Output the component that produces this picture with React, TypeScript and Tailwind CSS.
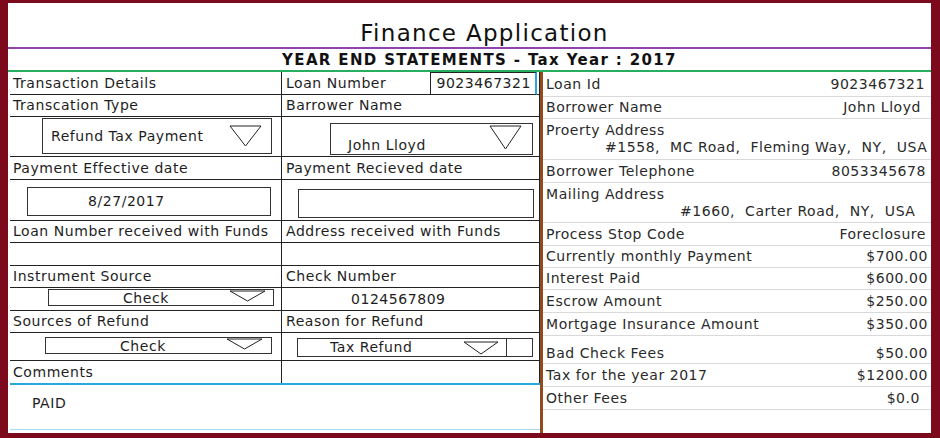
import React from 'react';

const font = { fontFamily: '"DejaVu Sans", Verdana, sans-serif' };

// outlined "select" arrow
const Arrow = ({ w, h, className = '' }: { w: number; h: number; className?: string }) => (
  <svg width={w} height={h} viewBox={`0 0 ${w} ${h}`} className={`shrink-0 ${className}`}>
    <polygon points={`1,1 ${w - 1},1 ${w / 2},${h - 1}`} fill="white" stroke="#222" strokeWidth="1" />
  </svg>
);

type Row = { label: string; value?: string; h: string; pr?: string; extra?: React.ReactNode };

const summary: Row[] = [
  { label: 'Loan Id', value: '9023467321', h: 'h-[25px]', pr: 'pr-[6px]' },
  { label: 'Borrower Name', value: 'John Lloyd', h: 'h-[22px]', pr: 'pr-[10px]' },
  {
    label: 'Proerty Address',
    h: 'h-[41px] leading-[17px]',
    extra: <div className="pl-[59px] whitespace-pre">#1558,  MC Road,  Fleming Way,  NY,  USA</div>,
  },
  { label: 'Borrower Telephone', value: '8053345678', h: 'h-[23px]', pr: 'pr-[5px]' },
  {
    label: 'Mailing Address',
    h: 'h-[40px] leading-[17px]',
    extra: <div className="pl-[134px] whitespace-pre">#1660,  Carter Road,  NY,  USA</div>,
  },
  { label: 'Process Stop Code', value: 'Foreclosure', h: 'h-[23px]', pr: 'pr-[5px]' },
  { label: 'Currently monthly Payment', value: '$700.00', h: 'h-[22px]', pr: 'pr-[3px]' },
  { label: 'Interest Paid', value: '$600.00', h: 'h-[22px]', pr: 'pr-[3px]' },
  { label: 'Escrow Amount', value: '$250.00', h: 'h-[23px]', pr: 'pr-[3px]' },
  { label: 'Mortgage Insurance Amount', value: '$350.00', h: 'h-[23px]', pr: 'pr-[3px]' },
  { label: 'Bad Check Fees', value: '$50.00', h: 'h-[28px] pt-[8px]', pr: 'pr-[3px]' },
  { label: 'Tax for the year 2017', value: '$1200.00', h: 'h-[23px]', pr: 'pr-[3px]' },
  { label: 'Other Fees', value: '$0.0', h: 'h-[23px]', pr: 'pr-[11px]' },
];

const Cell = ({ children, className = '' }: { children?: React.ReactNode; className?: string }) => (
  <div className={`relative flex items-center whitespace-nowrap ${className}`}>{children}</div>
);

export default function App() {
  return (
    <div
      style={font}
      className="w-[940px] h-[438px] bg-white border-l-[8px] border-t-[3px] border-r-[9px] border-b-[5px] border-[#7d0a1c] flex flex-col text-[14px] tracking-[0.55px] text-[#1e1e1e]"
    >
      {/* heading */}
      <div className="h-[46px] shrink-0 border-b-2 border-[#8e44ad] flex items-end justify-center pb-[2px]">
        <span className="text-[23px] tracking-[1.3px] leading-none pl-[30px] text-[#111]">Finance Application</span>
      </div>
      <div className="h-[23px] shrink-0 border-b-2 border-[#27ae60] flex items-center justify-center">
        <span className="font-bold text-[15px] tracking-[1.35px] text-[#111] pt-[1px] pl-[20px]">
          YEAR END STATEMENTS - Tax Year : 2017
        </span>
      </div>

      <div className="flex flex-1 min-h-0">
        {/* form */}
        <div className="w-[532px] pl-[2px] flex flex-col">
          <div className="flex border-b border-[#222] h-[23px]">
            <Cell className="w-[272px] border-r border-[#222] pl-[3px]">Transaction Details</Cell>
            <Cell className="flex-1 border-r border-[#222] pl-[4px]">
              Loan Number
              <div className="ml-auto mr-[2px] mt-[1px] h-[23px] w-[107px] border border-[#222] border-r-[#29a8e0] border-r-2 flex items-center justify-end pr-[4px] bg-white">
                9023467321
              </div>
            </Cell>
          </div>
          <div className="flex border-b border-[#222] h-[22px]">
            <Cell className="w-[272px] border-r border-[#222] pl-[3px]">Transcation Type</Cell>
            <Cell className="flex-1 border-r border-[#222] pl-[4px]">Barrower Name</Cell>
          </div>
          <div className="flex border-b border-[#222] h-[40px]">
            <Cell className="w-[272px] border-r border-[#222] pl-[32px] pr-[9px]">
              <div className="w-full h-[36px] mb-[1px] border border-[#333] flex items-center pl-[8px] pr-[9px]">
                <span className="flex-1">Refund Tax Payment</span>
                <Arrow w={33} h={22} />
              </div>
            </Cell>
            <Cell className="flex-1 border-r border-[#222] pl-[48px] pr-[6px]">
              <div className="w-full h-[32px] mt-[5px] border border-[#333] flex pl-[17px] pr-[10px]">
                <span className="flex-1 self-end leading-[18px]">John Lloyd</span>
                <Arrow w={33} h={25} className="mt-[1px]" />
              </div>
            </Cell>
          </div>
          <div className="flex border-b border-[#222] h-[23px]">
            <Cell className="w-[272px] border-r border-[#222] pl-[3px]">Payment Effective date</Cell>
            <Cell className="flex-1 border-r border-[#222] pl-[4px]">Payment Recieved date</Cell>
          </div>
          <div className="flex border-b border-[#222] h-[41px]">
            <Cell className="w-[272px] border-r border-[#222] pl-[17px] pr-[10px]">
              <div className="w-full h-[29px] mt-[3px] border border-[#333] flex items-center pl-[60px]">8/27/2017</div>
            </Cell>
            <Cell className="flex-1 border-r border-[#222] pl-[16px] pr-[5px]">
              <div className="w-full h-[29px] mt-[7px] border border-[#333]" />
            </Cell>
          </div>
          <div className="flex border-b border-[#222] h-[22px]">
            <Cell className="w-[272px] border-r border-[#222] pl-[3px]">Loan Number received with Funds</Cell>
            <Cell className="flex-1 border-r border-[#222] pl-[4px]">Address received with Funds</Cell>
          </div>
          <div className="flex border-b border-[#222] h-[23px]">
            <Cell className="w-[272px] border-r border-[#222]" />
            <Cell className="flex-1 border-r border-[#222]" />
          </div>
          <div className="flex border-b border-[#222] h-[22px]">
            <Cell className="w-[272px] border-r border-[#222] pl-[3px]">Instrument Source</Cell>
            <Cell className="flex-1 border-r border-[#222] pl-[4px]">Check Number</Cell>
          </div>
          <div className="flex border-b border-[#222] h-[23px]">
            <Cell className="w-[272px] border-r border-[#222] pl-[38px] pr-[7px] items-start">
              <div className="w-full h-[17px] mt-[1px] border border-[#333] flex relative">
                <span className="absolute left-[74px] top-[1px] leading-[15px]">Check</span>
                <Arrow w={37} h={12} className="ml-auto mr-[7px]" />
              </div>
            </Cell>
            <Cell className="flex-1 border-r border-[#222] pl-[69px]">0124567809</Cell>
          </div>
          <div className="flex border-b border-[#222] h-[22px]">
            <Cell className="w-[272px] border-r border-[#222] pl-[3px]">Sources of Refund</Cell>
            <Cell className="flex-1 border-r border-[#222] pl-[4px]">Reason for Refund</Cell>
          </div>
          <div className="flex border-b border-[#222] h-[28px]">
            <Cell className="w-[272px] border-r border-[#222] pl-[35px] pr-[9px] items-start">
              <div className="w-full h-[17px] mt-[4px] border border-[#333] flex relative">
                <span className="absolute left-[74px] top-[1px] leading-[15px]">Check</span>
                <Arrow w={37} h={12} className="ml-auto mr-[8px]" />
              </div>
            </Cell>
            <Cell className="flex-1 border-r border-[#222] pl-[15px] pr-[6px] items-start">
              <div className="w-full h-[19px] mt-[5px] border border-[#333] flex">
                <span className="leading-[17px] pl-[32px] w-[158px]">Tax Refund</span>
                <div className="w-[50px] border-t border-[#333] -mt-[1px] flex justify-center pt-[2px]">
                  <Arrow w={36} h={14} />
                </div>
                <div className="flex-1 border-l border-[#333]" />
              </div>
            </Cell>
          </div>
          <div className="flex h-[24px] border-b-2 border-[#29a8e0]">
            <Cell className="w-[272px] border-r border-[#222] pl-[3px]">Comments</Cell>
            <Cell className="flex-1 border-r border-[#222]" />
          </div>
          <div className="flex-1 border-b border-[#a9d9f2] pl-[22px] pt-[8px] mb-[3px]">PAID</div>
        </div>

        {/* borrower summary */}
        <div className="flex-1 border-l-[3px] border-[#934a1e] flex flex-col text-[#2a2a2a]">
          {summary.map((r) => (
            <div key={r.label} className={`${r.h} border-b border-[#d9d9d9] pl-[3px] flex flex-col justify-center`}>
              <div className="flex whitespace-nowrap">
                <span>{r.label}</span>
                {r.value && <span className={`ml-auto ${r.pr}`}>{r.value}</span>}
              </div>
              {r.extra}
            </div>
          ))}
        </div>
      </div>
    </div>
  );
}
